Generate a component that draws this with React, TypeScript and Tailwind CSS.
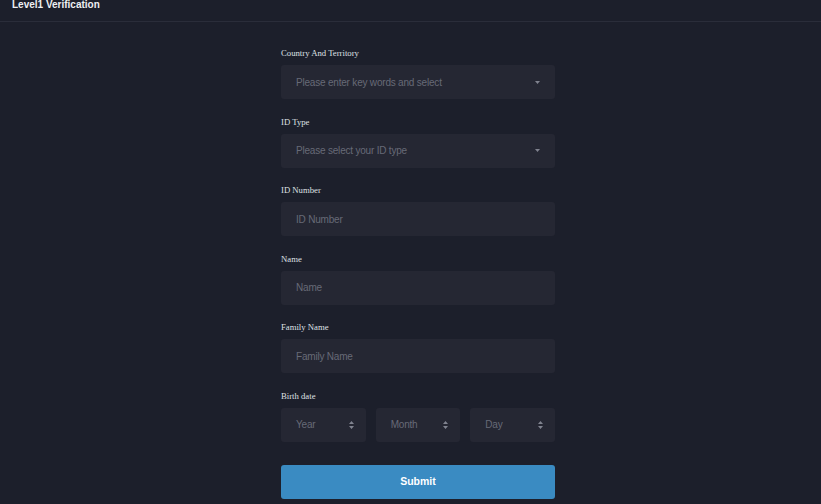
function Caret() {
  return (
    <svg width="5" height="3" viewBox="0 0 5 3" aria-hidden="true">
      <path d="M0 0h5L2.5 3z" fill="#80838f" />
    </svg>
  )
}

function UpDown() {
  return (
    <svg width="5" height="8" viewBox="0 0 5 8" aria-hidden="true">
      <path d="M0 3h5L2.5 0z M0 5h5L2.5 8z" fill="#80838f" />
    </svg>
  )
}

function Label({ children }: { children: React.ReactNode }) {
  return (
    <div className="h-[12px] text-[8.7px] leading-[12px] font-normal text-[#dfe0e4] font-['Liberation_Serif',serif]">
      {children}
    </div>
  )
}

function Field({ label, placeholder, select }: { label: string; placeholder: string; select?: boolean }) {
  return (
    <div className="flex flex-col gap-[6px]">
      <Label>{label}</Label>
      <div className="h-[34px] rounded-[3px] bg-[#252733] flex items-center justify-between pl-[15px] pr-[15px]">
        <span className="text-[10px] tracking-[-0.2px] text-[#676a77]">{placeholder}</span>
        {select && <Caret />}
      </div>
    </div>
  )
}

export default function App() {
  const dates = ['Year', 'Month', 'Day']
  return (
    <div className="w-[821px] h-[504px] overflow-hidden bg-[#1c1f2b] font-['Liberation_Sans',Arial,sans-serif]">
      <div className="h-[22px] border-b border-[#2a2d3a] pl-[12px]">
        <div className="text-[10px] leading-[10px] font-bold text-[#eef0f3]">Level1 Verification</div>
      </div>
      <div className="pl-[281px] pt-[25px]">
        <div className="w-[274px] flex flex-col gap-[16.5px]">
          <Field label="Country And Territory" placeholder="Please enter key words and select" select />
          <Field label="ID Type" placeholder="Please select your ID type" select />
          <Field label="ID Number" placeholder="ID Number" />
          <Field label="Name" placeholder="Name" />
          <Field label="Family Name" placeholder="Family Name" />
          <div className="flex flex-col gap-[6px]">
            <Label>Birth date</Label>
            <div className="flex gap-[10px]">
              {dates.map((d) => (
                <div key={d} className="flex-1 h-[34px] rounded-[3px] bg-[#252733] flex items-center justify-between pl-[15px] pr-[12px]">
                  <span className="text-[10px] tracking-[-0.2px] text-[#676a77]">{d}</span>
                  <UpDown />
                </div>
              ))}
            </div>
          </div>
          <button className="mt-[6.5px] h-[34px] rounded-[3px] bg-[#3a8bc2] text-white text-[10.5px] font-bold">
            Submit
          </button>
        </div>
      </div>
    </div>
  )
}
